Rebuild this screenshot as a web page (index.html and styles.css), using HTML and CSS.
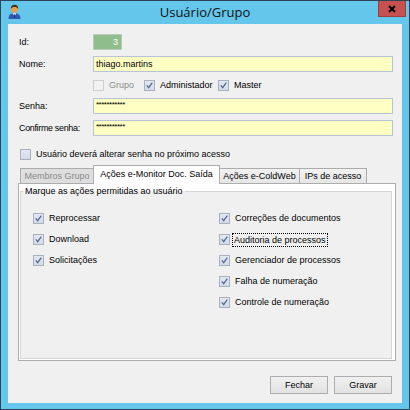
FILE: index.html
```html
<!DOCTYPE html>
<html lang="pt-BR">
<head>
<meta charset="utf-8">
<title>Usuário/Grupo</title>
<link rel="stylesheet" href="styles.css">
</head>
<body>
<div class="window">
  <div class="titlebar">
    <span class="app-icon">
      <svg width="13" height="15" viewBox="0 0 13 15">
        <path d="M0.5 15 C0.5 10.5 2.5 9.2 6.5 9.2 C10.5 9.2 12.5 10.5 12.5 15 Z" fill="#2d5cb0"/>
        <path d="M4.6 9.3 L6.5 12.2 L8.4 9.3 Z" fill="#ffffff"/>
        <path d="M6.1 10.2 L6.9 10.2 L7.2 13.2 L6.5 14 L5.8 13.2 Z" fill="#183a7c"/>
        <circle cx="6.5" cy="5.2" r="3.4" fill="#e9a04c"/>
        <path d="M2.9 5 C2.7 1.8 4.6 0.8 6.5 0.8 C8.6 0.8 10.4 1.9 10.1 5 C9.4 3.4 8.2 3 6.5 3 C4.9 3 3.7 3.5 2.9 5 Z" fill="#4e2f14"/>
      </svg>
    </span>
    <span class="title">Usuário/Grupo</span>
    <span class="close">
      <svg width="8" height="8" viewBox="0 0 8 8"><path d="M1 1 L7 7 M7 1 L1 7" stroke="#000" stroke-width="2"/></svg>
    </span>
  </div>

  <div class="client">
    <div class="form">
      <span class="lbl">Id:</span>
      <div class="field id-field">3</div>

      <span class="lbl">Nome:</span>
      <div class="field">thiago.martins</div>

      <span></span>
      <div class="check-line">
        <span class="cb disabled w-grupo"><span class="box"></span>Grupo</span>
        <span class="cb w-admin"><span class="box checked"></span>Administador</span>
        <span class="cb"><span class="box checked"></span>Master</span>
      </div>

      <span class="lbl">Senha:</span>
      <div class="field pw">***********</div>

      <span class="lbl narrow">Confirme senha:</span>
      <div class="field pw">***********</div>
    </div>

    <div class="reset-line">
      <span class="cb"><span class="box"></span>Usuário deverá alterar senha no próximo acesso</span>
    </div>

    <div class="tabs">
      <div class="tabstrip">
        <span class="tab disabled t1">Membros Grupo</span>
        <span class="tab selected t2">Ações e-Monitor Doc. Saída</span>
        <span class="tab t3">Ações e-ColdWeb</span>
        <span class="tab t4">IPs de acesso</span>
      </div>
      <div class="tabpanel">
        <fieldset class="group">
          <legend>Marque as ações permitidas ao usuário</legend>
          <div class="cols">
            <div class="col">
              <span class="cb"><span class="box checked"></span>Reprocessar</span>
              <span class="cb"><span class="box checked"></span>Download</span>
              <span class="cb"><span class="box checked"></span>Solicitações</span>
            </div>
            <div class="col">
              <span class="cb"><span class="box checked"></span>Correções de documentos</span>
              <span class="cb"><span class="box checked"></span><span class="focus">Auditoria de processos</span></span>
              <span class="cb"><span class="box checked"></span>Gerenciador de processos</span>
              <span class="cb"><span class="box checked"></span>Falha de numeração</span>
              <span class="cb"><span class="box checked"></span>Controle de numeração</span>
            </div>
          </div>
        </fieldset>
      </div>
    </div>

    <div class="buttons">
      <button class="btn">Fechar</button>
      <button class="btn">Gravar</button>
    </div>
  </div>
</div>
</body>
</html>
```

FILE: styles.css
```css
* { box-sizing: border-box; }

body {
  margin: 0;
  font-family: "Liberation Sans", Arial, sans-serif;
  font-size: 9px;
  color: #000;
}

.window {
  width: 410px;
  height: 410px;
  border: 1px solid #2c4458;
  background: #63c6ea;
  display: flex;
  flex-direction: column;
}

.titlebar {
  height: 23px;
  display: grid;
  grid-template-columns: 1fr auto 1fr;
  align-items: start;
}

.app-icon {
  justify-self: start;
  margin: 3px 0 0 7px;
  height: 15px;
  display: flex;
}

.title {
  font-family: "Open Sans", "Noto Sans", sans-serif;
  font-size: 13px;
  line-height: 18px;
  padding-top: 2px;
  color: #111;
}

.close {
  justify-self: end;
  width: 28px;
  height: 16px;
  margin-right: 3px;
  background: #c75050;
  border: 1px solid #9f3d3c;
  border-top: none;
  display: flex;
  align-items: center;
  justify-content: center;
}

.client {
  flex: 1;
  margin: 0 7px 6px;
  background: #f0f0f0;
  display: flex;
  flex-direction: column;
}

.form {
  padding: 10px 9px 0 11px;
  display: grid;
  grid-template-columns: 74px 300px;
  grid-template-rows: 16px 16px 14px 16px 16px;
  row-gap: 6px;
  align-items: center;
}

.lbl { line-height: 16px; }
.narrow { letter-spacing: -0.35px; }

.field {
  height: 16px;
  border: 1px solid #b4c6d8;
  background: #ffffc4;
  padding: 0 2px;
  line-height: 14px;
  white-space: nowrap;
}

.id-field {
  width: 29px;
  background: #8fbd8c;
  border-color: #b9ccb9;
  color: #fff;
  text-align: right;
  padding-right: 3px;
}

.pw {
  font-size: 8px;
  letter-spacing: -0.5px;
  line-height: 12px;
}

.check-line {
  display: flex;
  align-items: center;
  height: 14px;
}

.w-grupo { width: 51px; }
.w-admin { width: 74px; }

.cb {
  display: inline-flex;
  align-items: center;
  gap: 5px;
  white-space: nowrap;
  line-height: 11px;
}

.cb.disabled { color: #8d8d8d; }

.box {
  width: 11px;
  height: 11px;
  flex: none;
  border: 1px solid #a9b1bf;
  background: linear-gradient(#e3e8f1, #d3dbe8);
  display: inline-block;
}

.box.checked {
  background:
    url("data:image/svg+xml,%3Csvg xmlns='http://www.w3.org/2000/svg' width='9' height='9' viewBox='0 0 9 9'%3E%3Cpath d='M1.8 4.4 L3.7 6.6 L7.3 1.6' fill='none' stroke='%23566a92' stroke-width='1.3'/%3E%3C/svg%3E") center / 9px 9px no-repeat,
    linear-gradient(#e3e8f1, #d3dbe8);
}

.cb.disabled .box {
  border-color: #cdcdcd;
  background: #f2f2f2;
}

.reset-line {
  margin: 13px 0 0 12px;
  height: 11px;
  display: flex;
}

.tabs {
  margin: 5px 6px 0 10px;
}

.tabstrip {
  display: flex;
  align-items: flex-end;
  height: 18px;
  padding-left: 2px;
}

.tab {
  height: 15px;
  border: 1px solid #acacac;
  border-bottom: none;
  background: linear-gradient(#f2f2f2, #e6e6e6);
  display: flex;
  align-items: center;
  justify-content: center;
  white-space: nowrap;
  margin-right: -1px;
}

.tab.disabled {
  background: #dedede;
  color: #8a8a8a;
}

.tab.selected {
  height: 19px;
  margin-bottom: -1px;
  background: #fff;
  position: relative;
  z-index: 1;
  padding-bottom: 2px;
}

.t1 { width: 74px; }
.t2 { width: 127px; }
.t3 { width: 81px; }
.t4 { width: 68px; }

.tabpanel {
  height: 178px;
  border: 1px solid #acacac;
  background: #fff;
  padding: 2px 3px 1px 1px;
  display: flex;
}

.group {
  flex: 1;
  margin: 0;
  min-width: 0;
  border: 1px solid #d5d5d5;
  background: #f0f0f0;
  padding: 11px 0 0 12px;
}

.group legend {
  padding: 0 2px;
  margin-left: -10px;
  line-height: 11px;
}

.cols {
  display: grid;
  grid-template-columns: 186px 1fr;
}

.col {
  display: flex;
  flex-direction: column;
}

.col .cb { height: 21px; }

.focus {
  outline: 1px dotted #000;
  outline-offset: 0;
  padding: 0 1px;
  margin-left: -2px;
  line-height: 12px;
}

.buttons {
  display: flex;
  justify-content: flex-end;
  gap: 6px;
  margin-top: 15px;
  padding-right: 10px;
}

.btn {
  width: 58px;
  height: 18px;
  border: 1px solid #adadad;
  background: linear-gradient(#f0f0f0, #e2e2e2);
  font-family: "Liberation Sans", Arial, sans-serif;
  font-size: 9px;
  color: #000;
  padding: 0;
}
```
